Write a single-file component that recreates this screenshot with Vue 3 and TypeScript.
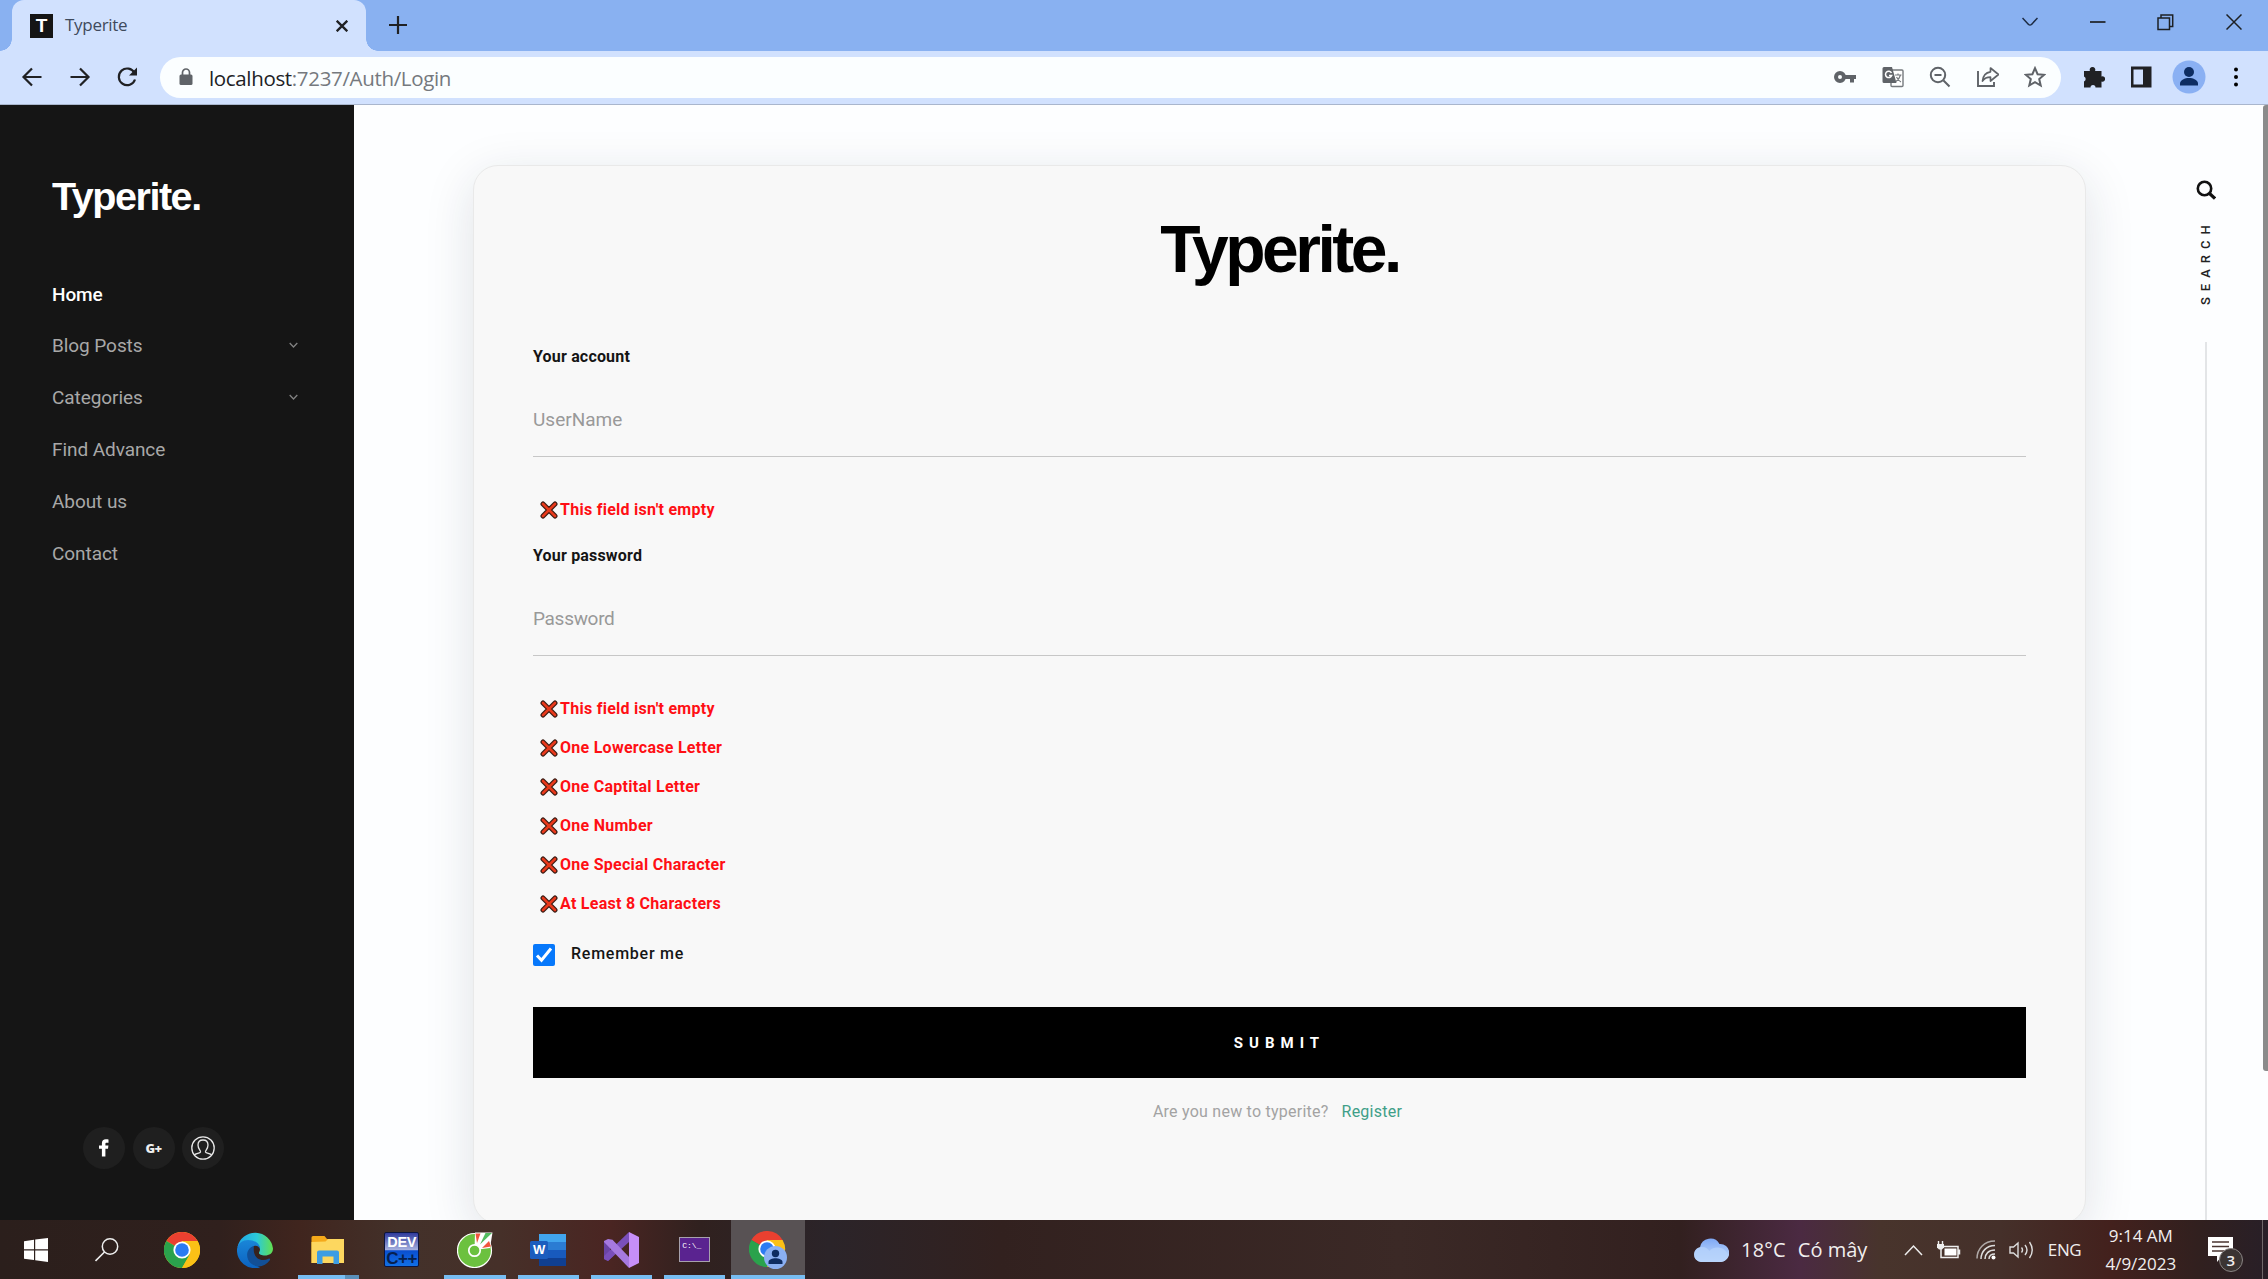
<script setup lang="ts">
interface MenuItem { label: string; current?: boolean; sub?: boolean }

const menu: MenuItem[] = [
  { label: 'Home', current: true },
  { label: 'Blog Posts', sub: true },
  { label: 'Categories', sub: true },
  { label: 'Find Advance' },
  { label: 'About us' },
  { label: 'Contact' },
]

const accountRules: string[] = ["This field isn't empty"]
const passwordRules: string[] = [
  "This field isn't empty",
  'One Lowercase Letter',
  'One Captital Letter',
  'One Number',
  'One Special Character',
  'At Least 8 Characters',
]
</script>

<template>
  <div class="screen">
    <header class="tabs">
      <div class="tab">
        <span class="favicon">T</span>
        <span class="tab-title">Typerite</span>
        <svg class="tab-close" width="12" height="12" viewBox="0 0 12 12"><path d="M.7.7l10.600 10.600M11.300.7L.7 11.300" stroke="#202124" stroke-width="2.300" /></svg>
      </div>
      <svg class="plus" width="18" height="18" viewBox="0 0 18 18"><path d="M9 0v18M0 9h18" stroke="#202124" stroke-width="2.200" /></svg>
      <div class="win">
        <svg width="16" height="10" viewBox="0 0 16 10"><path d="M.5 1l6 6.500q1.500 1.200 3 0L15.500 1" fill="none" stroke="#1d2b42" stroke-width="1.500" /></svg>
        <svg width="16" height="16" viewBox="0 0 16 16"><path d="M0 8h15.500" stroke="#1d2024" stroke-width="1.700" /></svg>
        <svg width="17" height="17" viewBox="0 0 17 17"><path d="M1 4h11.500v11.500H1zM4 4V1h11.700v11.500h-3" fill="none" stroke="#1d2024" stroke-width="1.500" /></svg>
        <svg width="16" height="16" viewBox="0 0 16 16"><path d="M.5.5l15 15M15.500.5l-15 15" stroke="#1d2024" stroke-width="1.500" /></svg>
      </div>
    </header>

    <div class="toolbar">
      <svg class="nav" width="22" height="22" viewBox="0 0 22 22"><path d="M20.500 11H2.500M11 2.500L2.500 11l8.500 8.500" fill="none" stroke="#202124" stroke-width="2.200" /></svg>
      <svg class="nav" width="22" height="22" viewBox="0 0 22 22"><path d="M1.500 11h18M11 2.500l8.500 8.500-8.500 8.500" fill="none" stroke="#202124" stroke-width="2.200" /></svg>
      <svg class="nav reload" width="22" height="22" viewBox="0 0 22 22"><path d="M18.500 7A8.300 8.300 0 1 0 19 13.500" fill="none" stroke="#202124" stroke-width="2.200" /><path d="M21 1.500v8h-8z" fill="#202124" /></svg>
      <div class="omni">
        <svg width="14" height="18" viewBox="0 0 14 18"><rect x=".5" y="6.500" width="13" height="10.500" rx="1.500" fill="#5f6368" /><path d="M3.500 7V4.500a3.500 3.500 0 0 1 7 0V7" fill="none" stroke="#5f6368" stroke-width="1.700" /></svg>
        <span class="url"><b>localhost</b>:7237/Auth/Login</span>
        <div class="omni-icons">
          <svg viewBox="0 0 22 22"><circle cx="6" cy="11" r="4" fill="none" stroke="#5f6368" stroke-width="4" /><path d="M10 9h12v4h-2v3.500h-4V13h-6z" fill="#5f6368" /></svg>
          <svg viewBox="0 0 22 22"><rect x="9" y="4" width="12" height="16.500" rx="1" fill="#fff" stroke="#767a7e" stroke-width="1.400" /><path d="M2 1h8l4.500 16H2a1.500 1.500 0 0 1-1.500-1.500v-13A1.500 1.500 0 0 1 2 1z" fill="#5f6368" /><path d="M9.500 6.800A3.200 3.200 0 1 0 9.700 9.500H7" fill="none" stroke="#fff" stroke-width="1.500" /><path d="M13 9h6.500M16 7.500V9M18.500 9c-.8 3-2.500 5-4.500 6.500M14.500 11c1 2 2.500 4 4.500 5" fill="none" stroke="#767a7e" stroke-width="1.200" /></svg>
          <svg viewBox="0 0 22 22"><circle cx="9" cy="9" r="7.200" fill="none" stroke="#5f6368" stroke-width="2" /><path d="M5.500 9h7M14.500 14.500l6 6" stroke="#5f6368" stroke-width="2" /></svg>
          <svg viewBox="0 0 22 22"><path d="M1 5v15h16v-4" fill="none" stroke="#5f6368" stroke-width="1.900" /><path d="M13.500 2l8 6.500-8 6.500v-3.800c-3.500 0-6 1-8 3.800.5-5 3.200-8.500 8-9.200z" fill="none" stroke="#5f6368" stroke-width="1.700" stroke-linejoin="round" /></svg>
          <svg viewBox="0 0 22 22"><path d="M11 2.200l2.600 6 6.600.6-5 4.300 1.500 6.400L11 16.100l-5.700 3.400 1.500-6.400-5-4.300 6.600-.6z" fill="none" stroke="#5f6368" stroke-width="2" /></svg>
        </div>
      </div>
      <div class="right-icons">
        <svg width="22" height="22" viewBox="0 0 22 22"><path d="M1 5h6a2.800 2.800 0 1 1 5 0h6.500v5.500a2.700 2.700 0 1 1 0 5V21.500h-6a2.500 2.500 0 0 0-5 0H1v-6a2.700 2.700 0 0 0 0-5z" fill="#202124" /></svg>
        <svg width="22" height="22" viewBox="0 0 22 22"><path d="M1 .5h20.500v21H1zM3.500 3.500v15H13v-15z" fill="#202124" fill-rule="evenodd" /></svg>
        <svg width="34" height="34" viewBox="0 0 34 34"><circle cx="17" cy="17" r="16.500" fill="#8ab0f3" /><circle cx="17" cy="12" r="5" fill="#0d2c62" /><path d="M8 25.500v-2c0-3.500 5-5.500 9-5.500s9 2 9 5.500v2z" fill="#0d2c62" /></svg>
        <svg width="6" height="20" viewBox="0 0 6 20"><circle cx="3" cy="2.500" r="2" /><circle cx="3" cy="10" r="2" /><circle cx="3" cy="17.500" r="2" /></svg>
      </div>
    </div>

    <div class="page">
      <aside class="side">
        <div class="logo">Typerite.</div>
        <nav class="menu">
          <a v-for="m in menu" :key="m.label" :class="{ current: m.current }">
            <span>{{ m.label }}</span>
            <svg v-if="m.sub" width="9" height="7" viewBox="0 0 9 7"><path d="M.7 1l3.800 4L8.300 1" fill="none" stroke="#828282" stroke-width="1.300" /></svg>
          </a>
        </nav>
        <div class="social">
          <a><svg width="12" height="18" viewBox="0 0 12 18"><path d="M10.500.5v3.200H8.600c-.9 0-1.200.4-1.200 1.200V6.500h3l-.4 3.200H7.400v7.800H3.900V9.700H1V6.500h2.900V4.300C3.900 1.800 5.400.3 7.800.3c1.200 0 2.200.1 2.700.2z" fill="#fff" /></svg></a>
          <a class="gp">G+</a>
          <a><svg width="24" height="24" viewBox="0 0 24 24"><g fill="none" stroke="#e8e8e8" stroke-width="1.300"><circle cx="12" cy="12" r="11.200" /><path d="M3.500 19c1-1.700 5.500-1.500 6-3 .4-1.300-2.500-2.700-2.500-7C7 5.800 9 4 12 4s5 1.800 5 5c0 4.300-2.900 5.700-2.500 7 .5 1.500 5 1.300 6 3" /></g></svg></a>
        </div>
      </aside>

      <main class="main">
        <form class="card" @submit.prevent>
          <div class="brand">Typerite.</div>
          <label class="label">Your account</label>
          <div class="field">UserName</div>
          <ul class="errors">
            <li v-for="r in accountRules" :key="r">
              <svg width="18" height="18" viewBox="0 0 18 18"><path d="M3 3l12 12M15 3L3 15" stroke="#3b1c14" stroke-width="5" stroke-linecap="round" /><path d="M3 3l12 12M15 3L3 15" stroke="#e8391b" stroke-width="2.600" stroke-linecap="round" /></svg>
              <span>{{ r }}</span>
            </li>
          </ul>
          <label class="label second">Your password</label>
          <div class="field pass">Password</div>
          <ul class="errors">
            <li v-for="r in passwordRules" :key="r">
              <svg width="18" height="18" viewBox="0 0 18 18"><path d="M3 3l12 12M15 3L3 15" stroke="#3b1c14" stroke-width="5" stroke-linecap="round" /><path d="M3 3l12 12M15 3L3 15" stroke="#e8391b" stroke-width="2.600" stroke-linecap="round" /></svg>
              <span>{{ r }}</span>
            </li>
          </ul>
          <div class="remember">
            <svg width="22" height="22" viewBox="0 0 22 22"><rect width="22" height="22" rx="2" fill="#0778fb" /><path d="M4 11.500l4.500 4.800L18 4.500" fill="none" stroke="#fff" stroke-width="3" /></svg>
            <span>Remember me</span>
          </div>
          <button class="submit">SUBMIT</button>
          <p class="signup"><span>Are you new to typerite?</span><a>Register</a></p>
        </form>
        <div class="rail">
          <svg width="20" height="20" viewBox="0 0 20 20"><circle cx="8.500" cy="8.500" r="6.700" fill="none" stroke="#111" stroke-width="2.600" /><path d="M13 13l6 5.500" stroke="#111" stroke-width="3.200" /></svg>
          <span class="search">SEARCH</span>
          <i />
        </div>
        <div class="scroll" />
      </main>
    </div>

    <footer class="taskbar">
      <div class="slot">
        <svg width="24" height="24" viewBox="0 0 24 24"><path d="M0 3.200l10-1.400v9.500H0zM11.200 1.600L24 0v11.300H11.200zM0 12.500h10V22L0 20.700zM11.200 12.500H24V24l-12.800-1.700z" fill="#fff" /></svg>
      </div>
      <div class="slot find">
        <svg width="24" height="24" viewBox="0 0 24 24"><circle cx="15" cy="8.500" r="7.700" fill="none" stroke="#eee" stroke-width="1.500" /><path d="M9.500 14L.5 23" stroke="#eee" stroke-width="1.600" /></svg>
      </div>
      <div class="slot">
        <svg width="36" height="36" viewBox="0 0 36 36"><circle cx="18" cy="18" r="18" fill="#fbc116" /><path d="M18 18L2.400 9A18 18 0 0 1 33.600 9z" fill="#ea4030" /><path d="M2.400 9A18 18 0 0 0 18 36l7.800-13.500L18 18z" fill="#2aa24c" /><path d="M33.600 9H18v9l7.800 4.500L18 36A18 18 0 0 0 33.600 9z" fill="#fbc116" /><circle cx="18" cy="18" r="8.600" fill="#fff" /><circle cx="18" cy="18" r="6.800" fill="#2b7bf3" /></svg>
      </div>
      <div class="slot">
        <svg width="36" height="36" viewBox="0 0 36 36">
          <defs>
            <linearGradient id="edge-top" x1="0" x2="1"><stop offset="0" stop-color="#1fa5e8" /><stop offset=".55" stop-color="#2cc9d8" /><stop offset="1" stop-color="#62e04e" /></linearGradient>
            <linearGradient id="edge-body" x1="0" y1="0" x2="0" y2="1"><stop offset="0" stop-color="#1a86d8" /><stop offset="1" stop-color="#0b62c0" /></linearGradient>
          </defs>
          <path d="M.5 15A18 18 0 0 1 36 16.500c0 5-4 7-8 7-3.500 0-6-1.200-6-2.500s1-1.500 1-4c0-3-3-5-7-5-6 0-13 2-15.500 3z" fill="url(#edge-top)" />
          <path d="M0 17c1-6 6-9 11-9 6 0 12 3 12 9-1-3-4-4-6-3-7 3-6 15 1 18.500 1.500 1 3 2 5 3A18 18 0 0 1 0 17z" fill="url(#edge-body)" />
          <path d="M17 14c-8 2-9 12-3 17.500 6 5 14 3.500 19-3.500.5-1-.5-1.800-1.500-1.200C24 30.500 15 26 17 14z" fill="#124f96" />
        </svg>
      </div>
      <div class="slot run stack">
        <svg width="34" height="28" viewBox="0 0 34 28"><path d="M.5 1.500A1.500 1.500 0 0 1 2 0h11.500l2.500 3H33v24H.5z" fill="#f5a91a" /><path d="M.5 6l14-.5L17 3h16v24H.5z" fill="#fdd75f" /><path d="M6 28V16.500A2 2 0 0 1 8 14.500h18a2 2 0 0 1 2 2V28h-5.500v-7.500h-11V28z" fill="#3d9de3" /></svg>
      </div>
      <div class="slot">
        <div class="dev"><b>DEV</b><b class="cpp">C++</b></div>
      </div>
      <div class="slot run">
        <svg width="36" height="36" viewBox="0 0 36 36"><circle cx="17.500" cy="18.500" r="17" fill="#6cc13f" stroke="#fff" stroke-width="1.200" /><path d="M17.500 18L18 .5h17.500L33 16z" fill="#fff" /><path d="M18.500 1.500h5L20 11z" fill="#f0553d" /><path d="M28.500 1H35L23 12.500z" fill="#52bb5f" /><path d="M32 9l2 5.500L25 16z" fill="#f0553d" /><circle cx="17.500" cy="18.500" r="5.700" fill="#6cc13f" stroke="#fff" stroke-width="1.700" /></svg>
      </div>
      <div class="slot run">
        <div class="word">
          <svg width="36" height="34" viewBox="0 0 36 34"><path d="M9 1h27v8H9z" fill="#41a5ee" /><path d="M9 9h27v8H9z" fill="#2b7cd3" /><path d="M9 17h27v8H9z" fill="#185abd" /><path d="M9 25h27v8H9z" fill="#103f91" /><rect y="8" width="18" height="18" rx="1.500" fill="#1b5dbe" /></svg>
          <b>W</b>
        </div>
      </div>
      <div class="slot run">
        <svg width="36" height="36" viewBox="0 0 36 36"><path d="M1 9v18l4 2 6.500-6.500L7 18v-5z" fill="#6a45a5" /><path d="M5 29L26 10V0L1 24v3z" fill="#7a4fba" /><path d="M1 9l4-2 4.500.8L26 25v11L1 10z" fill="#a679e0" /><path d="M26 0l10 5v26l-10 5z" fill="#c68ff8" /></svg>
      </div>
      <div class="slot run">
        <div class="cmd">C:\_</div>
      </div>
      <div class="slot run active">
        <svg width="38" height="38" viewBox="0 0 38 38"><path d="M18 18L2.400 9A18 18 0 0 1 33.600 9H18z" fill="#ea4030" /><path d="M2.400 9A18 18 0 0 0 18 36l7.800-13.500L18 18z" fill="#2aa24c" /><path d="M33.600 9H18v9l7.800 4.500L18 36A18 18 0 0 0 33.600 9z" fill="#fbc116" /><circle cx="18" cy="18" r="8.600" fill="#fff" /><circle cx="18" cy="18" r="6.800" fill="#2b7bf3" /><circle cx="26.500" cy="26.500" r="11.500" fill="#8ab0f3" /><circle cx="26.500" cy="22.500" r="3.700" fill="#0d2c62" /><path d="M19.500 33v-2c0-2.500 4-3.700 7-3.700s7 1.200 7 3.700v2z" fill="#0d2c62" /></svg>
      </div>

      <div class="tray">
        <svg class="cloud" width="36" height="26" viewBox="0 0 36 26"><defs><linearGradient id="cloud-back" x1="0" y1="0" x2="0" y2="1"><stop offset="0" stop-color="#7fa8f4" /><stop offset="1" stop-color="#c9e0fd" /></linearGradient></defs><path d="M8 25a7.500 7.500 0 0 1-1-14.800A10.500 10.500 0 0 1 26.500 7 9 9 0 0 1 28 25z" fill="url(#cloud-back)" /><path d="M8 25a7.500 7.500 0 0 1 1-15c4 0 6 2 7.500 4 3-5 15-5 18 3 .5 4-2 8-6.500 8z" fill="#b5d2fb" opacity=".8" /></svg>
        <span class="temp">18°C</span><span class="sky">Có mây</span>
        <svg class="caret" width="19" height="12" viewBox="0 0 19 12"><path d="M1 11l8.500-9 8.500 9" fill="none" stroke="#eee" stroke-width="1.500" /></svg>
        <svg class="batt" width="24" height="18" viewBox="0 0 24 18"><path d="M4 5.500h17v11H4zM22.500 8.500v5" fill="none" stroke="#eee" stroke-width="1.500" /><path d="M7.500 7.500h12v7h-12z" fill="#fff" /><path d="M1.500 0v3M5.500 0v3" stroke="#eee" stroke-width="1.400" /><path d="M0 3h7v3.500L5 8.500H2L0 6.500z" fill="#eee" /></svg>
        <svg class="wifi" width="20" height="20" viewBox="0 0 20 20"><g fill="none" stroke="#ddd" stroke-width="1.500"><path d="M1 18.500C1 9 8 1 19 1" opacity=".7" /><path d="M5 19C5 12 10 5.500 19 5.500" /><path d="M9 19c0-5 3.500-9 10-9" /><path d="M13 19c0-3 2-5 6-5" /></g><circle cx="17.500" cy="17.500" r="2" fill="#fff" /></svg>
        <svg class="vol" width="26" height="20" viewBox="0 0 26 20"><g fill="none" stroke="#ddd" stroke-width="1.400"><path d="M1 7h3.500L9 3v14l-4.500-4H1z" /><path d="M12.500 7.500q2 2.500 0 5M16 5q4 5 0 10M20.500 2q5.500 8 0 16" /></g></svg>
        <span class="eng">ENG</span>
        <div class="clock"><span>9:14 AM</span><span>4/9/2023</span></div>
        <div class="note">
          <svg width="26" height="26" viewBox="0 0 26 26"><path d="M0 0h25v19H14l-5 6v-6H0z" fill="#fff" /><path d="M4 5h17M4 9.500h17M4 14h12" stroke="#4a3531" stroke-width="1.500" /></svg>
          <span class="count">3</span>
        </div>
        <i class="peek" />
      </div>
    </footer>
  </div>
</template>

<style>
html, body { margin: 0; overflow: hidden; }
</style>

<style scoped>
* { box-sizing: border-box; }
svg { display: block; flex: none; }
span, a, b { white-space: nowrap; }
.screen { width: 2268px; height: 1279px; display: flex; flex-direction: column; overflow: hidden; background: #fff; font-family: Roboto, sans-serif; }

.tabs { height: 51px; flex: none; display: flex; align-items: flex-start; background: #89b1f1; padding-left: 12px; }
.tab { position: relative; width: 354px; height: 51px; background: #d1e1fe; border-radius: 12px 12px 0 0; display: flex; align-items: center; padding: 0 18px 0 18px; }
.tab::before, .tab::after { content: ''; position: absolute; bottom: 0; width: 12px; height: 12px; }
.tab::before { left: -12px; background: radial-gradient(circle at 0 0, transparent 11.5px, #d1e1fe 12px); }
.tab::after { right: -12px; background: radial-gradient(circle at 100% 0, transparent 11.5px, #d1e1fe 12px); }
.favicon { width: 23px; height: 24px; background: #151515; color: #fff; font: bold 19px/24px "Liberation Sans", sans-serif; text-align: center; }
.tab-title { margin: -2px 0 0 12px; font: 17px/24px "Open Sans", sans-serif; letter-spacing: -.3px; color: #3f4a5c; flex: 1; }
.plus { margin: 16px 0 0 23px; }
.win { margin-left: auto; display: flex; align-items: center; height: 44px; padding-right: 26px; gap: 51.700px; }

.toolbar { height: 54px; flex: none; background: #d1e1fe; border-bottom: 1px solid #a9b6cd; display: flex; align-items: center; padding: 0 0 1px 21px; }
.nav { margin-right: 26px; }
.reload { margin-left: -1px; }
.omni { height: 41px; width: 1901px; margin-left: -4px; background: #fbfeff; border-radius: 21px; display: flex; align-items: center; padding-left: 19px; }
.url { margin: 2px 0 0 16px; font: 20.500px/40px "Open Sans", sans-serif; letter-spacing: -.34px; color: #75797e; }
.url b { font-weight: 400; color: #202124; }
.omni-icons { margin-left: auto; display: flex; gap: 25.500px; padding-right: 15px; }
.omni-icons svg { width: 22px; height: 22px; }
.right-icons { display: flex; align-items: center; margin-left: 22px; }
.right-icons svg:nth-child(2) { margin-left: 25px; }
.right-icons svg:nth-child(3) { margin-left: 20px; }
.right-icons svg:nth-child(4) { margin-left: 27px; }

.page { height: 1115px; flex: none; display: flex; overflow: hidden; }
.side { width: 354px; flex: none; background: #151515; display: flex; flex-direction: column; padding: 66px 47px 51px 52px; }
.logo { height: 50px; font: bold 39.500px/50px "Liberation Sans", sans-serif; color: #fff; letter-spacing: -1.450px; }
.menu { margin-top: 47px; }
.menu a { display: flex; height: 52px; align-items: center; justify-content: space-between; font-size: 19px; line-height: 52px; letter-spacing: -.07px; color: #a8a8a8; padding: 0 9px 0 0; }
.menu a svg { margin-top: -2px; }
.menu a.current { color: #fff; font-weight: 500; line-height: 51px; }
.social { margin-top: auto; display: flex; gap: 7.500px; padding-left: 31px; }
.social a { width: 42px; height: 42px; border-radius: 50%; background: #1f1f1f; display: flex; align-items: center; justify-content: center; }
.social .gp { color: #eee; font: 800 13px/42px "Open Sans", sans-serif; letter-spacing: -.5px; }

.main { flex: 1; display: flex; align-items: flex-start; background: #fdfeff; padding-left: 119px; }
.card { width: 1613px; height: 1059px; margin-top: 60px; border: 1px solid #e9e9e9; border-radius: 25px; background: #f8f8f8; box-shadow: 0 12px 50px rgba(25, 40, 65, .13); padding: 43px 59px 0; display: flex; flex-direction: column; flex: none; }
.brand { height: 80px; text-align: center; font: bold 66px/80px "Liberation Sans", sans-serif; letter-spacing: -3.500px; color: #000; }
.label { margin-top: 56px; height: 24px; font-size: 16px; line-height: 24px; font-weight: 700; letter-spacing: .18px; color: #151515; }
.label.second { margin-top: 15px; }
.field { margin-top: 25px; height: 63px; padding-top: 1px; border-bottom: 1px solid #c7c7c7; font-size: 19px; line-height: 50px; color: #999; flex: none; }
.field.pass { letter-spacing: -.3px; }
.errors { list-style: none; margin: 33px 0 0; padding: 0 0 0 7px; }
.errors li { height: 39px; display: flex; align-items: center; gap: 2px; font-size: 16px; line-height: 39px; font-weight: 700; letter-spacing: .27px; color: #ff0f14; }
.remember { margin-top: 21px; height: 22px; display: flex; gap: 16px; font-size: 16px; line-height: 20px; font-weight: 500; letter-spacing: .75px; color: #151515; }
.submit { margin-top: 41px; height: 71px; flex: none; border: 0; padding: 0; background: #000; color: #fff; font: 700 15px/70px Roboto, sans-serif; letter-spacing: 6px; }
.signup { margin: 22px 0 0 -4px; height: 24px; display: flex; justify-content: center; gap: 13px; font-size: 16px; line-height: 24px; letter-spacing: .24px; color: #a3a3a3; }
.signup a { color: #3f9f88; }
.rail { width: 40px; margin: 75px 0 0 100px; height: 1040px; display: flex; flex-direction: column; align-items: center; }
.search { margin-top: 21px; height: 84px; writing-mode: vertical-rl; transform: rotate(180deg); font: 500 13px/16px Roboto, sans-serif; letter-spacing: 6px; color: #222; }
.rail i { width: 2px; flex: 1; margin-top: 37px; background: #e3e5e7; }
.scroll { margin-left: auto; width: 5px; height: 966px; background: #8b8b8b; border-radius: 3px 0 0 3px; }

.taskbar { height: 59px; flex: none; display: flex; background: linear-gradient(90deg, #2b1f1c 0, #30201d 220px, #40251e 300px, #43312a 400px, #463029 500px, #4a2522 610px, #30211f 700px, #2b2429 830px, #32211f 1000px, #3b2926 1400px, #32201f 1680px, #4b2a42 1800px, #48342c 1880px, #45302a 2000px, #43211d 2110px, #31201f 2200px, #281f27 2268px); }
.slot { position: relative; width: 73.250px; display: flex; align-items: center; justify-content: center; }
.slot:first-child { width: 72px; }
.find { padding-right: 3px; }
.run::after { content: ''; position: absolute; bottom: 0; left: 6px; right: 6px; height: 4px; background: #77bdf2; }
.stack::after { background: linear-gradient(90deg, #77bdf2 47px, #5a90ba 47px); }
.active { background: #585254; }
.active::after { left: 0; right: 0; }
.dev { width: 35px; height: 35px; border: 1px solid #0b1540; border-radius: 2px; background: linear-gradient(#2f3a9c 0, #a3aede 50%, #0a4fd0 54%, #1170e6 100%); display: flex; flex-direction: column; align-items: center; overflow: hidden; color: #fff; font: bold 14.500px/19px "Liberation Sans", sans-serif; letter-spacing: -.4px; }
.cpp { color: #06204f; font-size: 17px; line-height: 13px; }
.word { position: relative; }
.word b { position: absolute; left: 0; top: 8px; width: 18px; text-align: center; color: #fff; font: bold 13px/18px "Liberation Sans", sans-serif; }
.cmd { width: 31px; height: 25px; border: 1.500px solid #a7a1ad; background: #5a2390; color: #fff; font: 8px/12px "Liberation Mono", monospace; padding: 2px 0 0 2px; }

.tray { margin-left: auto; display: flex; align-items: center; width: 575px; color: #f1eeee; font-family: "Open Sans", sans-serif; font-size: 20px; line-height: 24px; }
.temp { margin-left: 12px; letter-spacing: .2px; }
.sky { margin-left: 12px; width: 70px; }
.caret { margin-left: 36px; }
.batt { margin-left: 14px; }
.wifi { margin-left: 15px; }
.vol { margin-left: 13px; }
.eng { margin-left: 13px; width: 33px; font-size: 17px; letter-spacing: -.4px; }
.clock { margin-left: 24px; width: 72px; display: flex; flex-direction: column; align-items: center; font-size: 17px; line-height: 28px; }
.note { position: relative; margin-left: 31px; }
.count { position: absolute; left: 11px; top: 11px; width: 24px; height: 24px; border: 1px solid #8a8584; border-radius: 50%; background: #3b3433; text-align: center; font-size: 15px; line-height: 22px; font-weight: 600; }
.peek { width: 1px; height: 59px; margin: 0 5px 0 auto; background: #6f6769; }
</style>
